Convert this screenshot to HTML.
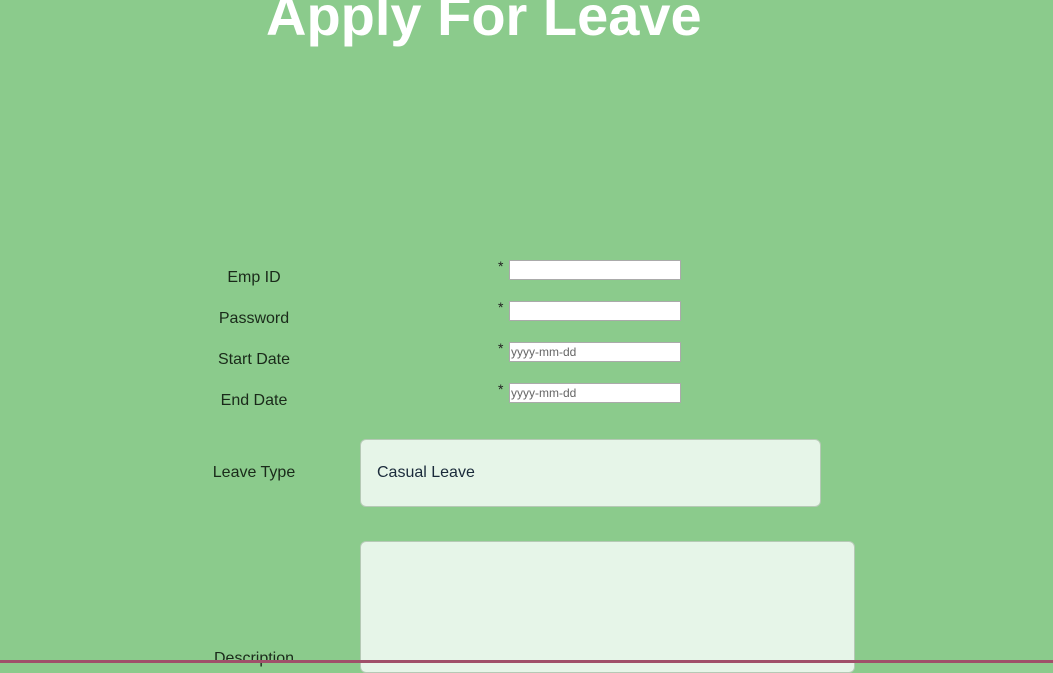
<!DOCTYPE html>
<html><head><style>
html,body{margin:0;padding:0;width:1053px;height:663px;overflow:hidden;background:#8bcb8c;font-family:"Liberation Sans",Arial,sans-serif}
.t{position:absolute;left:266px;top:-17px;font-size:56px;font-weight:bold;color:#fff;white-space:nowrap}
.l{position:absolute;font-size:16px;color:#1a2a1a;width:120px;text-align:center;left:194px}
.s{position:absolute;left:498px;font-size:14px;color:#222}
.i{position:absolute;left:509px;width:169px;height:18px;background:#fff;border:1px solid #aaa;font-size:12px;color:#666;line-height:18px;padding-left:1px;box-sizing:content-box}
.box{position:absolute;background:#e6f5e8;border:1px solid #b5c9b5;border-radius:6px}
.bot{position:absolute;left:0;top:660px;width:1053px;height:3px;background:#a0506a}
</style></head><body>
<div class="t">Apply For Leave</div>
<div class="l" style="top:269px">Emp ID</div>
<div class="l" style="top:310px">Password</div>
<div class="l" style="top:351px">Start Date</div>
<div class="l" style="top:392px">End Date</div>
<div class="s" style="top:258px">*</div><div class="i" style="top:260px"></div>
<div class="s" style="top:299px">*</div><div class="i" style="top:301px"></div>
<div class="s" style="top:340px">*</div><div class="i" style="top:342px">yyyy-mm-dd</div>
<div class="s" style="top:381px">*</div><div class="i" style="top:383px">yyyy-mm-dd</div>
<div class="l" style="top:464px">Leave Type</div>
<div class="box" style="left:360px;top:439px;width:459px;height:66px"><div style="position:absolute;left:16px;top:24px;font-size:16px;color:#1a2a3a">Casual Leave</div></div>
<div class="box" style="left:360px;top:541px;width:493px;height:130px"></div>
<div class="l" style="top:650px">Description</div>
<div class="bot"></div>
</body></html>
